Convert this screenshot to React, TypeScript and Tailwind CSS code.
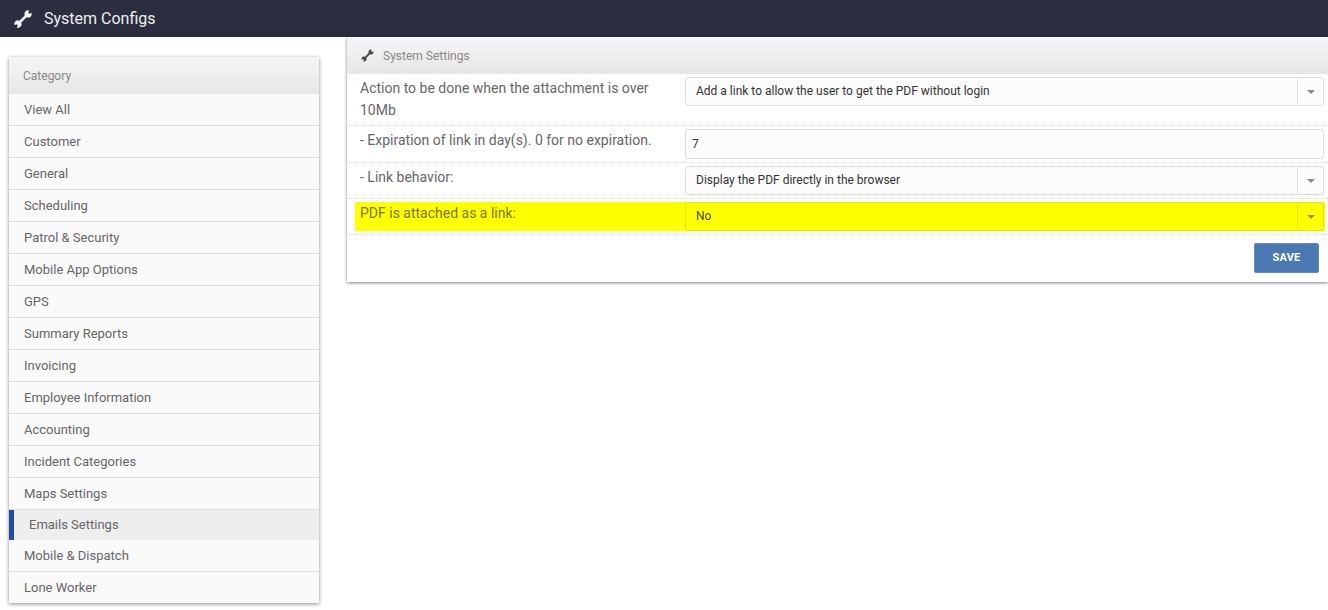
import React from "react";

const cats = ["View All","Customer","General","Scheduling","Patrol & Security","Mobile App Options","GPS","Summary Reports","Invoicing","Employee Information","Accounting","Incident Categories","Maps Settings"];

function Spanner({ className }: { className: string }) {
  return (
    <svg viewBox="0 0 24 24" className={className} fill="currentColor">
      <path transform="rotate(-45 12 12)" d="M7.91 10.5H16.09A4 4 0 0 1 23.4 10.25L21 11V13L23.4 13.75A4 4 0 0 1 16.09 13.5H7.91A4 4 0 0 1 0.6 13.75L3 13V11L0.6 10.25A4 4 0 0 1 7.91 10.5Z" />
    </svg>
  );
}

function Caret({ yellow }: { yellow?: boolean }) {
  return <span className={`h-0 w-0 border-x-[4px] border-t-[4px] border-x-transparent ${yellow ? "border-t-[#8f8f00]" : "border-t-[#888]"}`} />;
}

function SelectBox({ text, yellow }: { text: string; yellow?: boolean }) {
  return (
    <div className={`flex h-[29px] flex-1 items-center rounded-[3px] border pl-[10px] text-[12px] ${yellow ? "border-[#e3e300] bg-[#ffff00] text-[#444400]" : "border-[#dcdcdc] bg-[#fcfcfc] text-[#333]"}`}>
      <span className="flex-1 pb-[2px]">{text}</span>
      <span className={`flex h-[25px] w-[26px] items-center justify-center border-l ${yellow ? "border-[#e3e300]" : "border-[#dcdcdc]"}`}><Caret yellow={yellow} /></span>
    </div>
  );
}

export default function App() {
  return (
    <div className="h-[610px] w-[1328px] overflow-hidden bg-white font-['Roboto',sans-serif]">
      <header className="flex h-[37px] items-center bg-[#2b2e3e] pl-[12px] text-white">
        <Spanner className="h-[22px] w-[22px] text-[#f2f2f2]" />
        <span className="ml-[10px] text-[16px] text-[#eee]">System Configs</span>
      </header>
      <div className="flex items-start">
        <aside className="ml-[9px] mt-[20px] w-[310px] shadow-[0_1px_4px_rgba(0,0,0,0.45)]">
          <div className="flex h-[37px] items-center bg-gradient-to-b from-[#f6f6f6] to-[#e6e6e6] pl-[14px] text-[12px] text-[#888]">Category</div>
          {cats.map((c) => (
            <div key={c} className="flex h-[32px] items-center border-b border-[#ddd] bg-[#fafafa] pl-[15px] text-[13px] text-[#666]">{c}</div>
          ))}
          <div className="flex h-[30px] items-center border-l-[5px] border-[#1f4ea1] bg-[#eeeeee] pl-[15px] text-[13px] text-[#666]">Emails Settings</div>
          <div className="flex h-[32px] items-center border-b border-[#ddd] bg-[#fafafa] pl-[15px] text-[13px] text-[#666]">Mobile &amp; Dispatch</div>
          <div className="flex h-[31px] items-center bg-[#fafafa] pl-[15px] text-[13px] text-[#666]">Lone Worker</div>
        </aside>
        <main className="ml-[28px] h-[245px] flex-1 bg-white shadow-[0_1px_3px_rgba(0,0,0,0.5)]">
          <div className="flex h-[37px] items-center bg-gradient-to-b from-[#f6f6f6] to-[#e6e6e6] pl-[13px] text-[12px] text-[#888]">
            <Spanner className="h-[15px] w-[15px] text-[#444]" />
            <span className="ml-[8px]">System Settings</span>
          </div>
          <div className="flex h-[52px] border-b border-dotted border-[#ddd] pl-[13px] pr-[4px] text-[14px] leading-[22px] text-[#666]">
            <div className="w-[325px] pt-[3px]">Action to be done when the attachment is over 10Mb</div>
            <div className="flex flex-1 items-start pt-[3px]"><SelectBox text="Add a link to allow the user to get the PDF without login" /></div>
          </div>
          <div className="flex h-[37px] border-b border-dotted border-[#ddd] pl-[13px] pr-[4px] text-[14px] leading-[22px] text-[#666]">
            <div className="w-[325px] pt-[3px]">- Expiration of link in day(s). 0 for no expiration.</div>
            <div className="flex flex-1 items-start pt-[3px]">
              <div className="flex h-[30px] flex-1 items-center rounded-[3px] border border-[#dcdcdc] bg-[#fcfcfc] pl-[6px] text-[12px] text-[#333]">7</div>
            </div>
          </div>
          <div className="flex h-[36px] border-b border-dotted border-[#ddd] pl-[13px] pr-[4px] text-[14px] leading-[22px] text-[#666]">
            <div className="w-[325px] pt-[3px]">- Link behavior:</div>
            <div className="flex flex-1 items-start pt-[3px]"><SelectBox text="Display the PDF directly in the browser" /></div>
          </div>
          <div className="flex h-[36px] border-b border-dotted border-[#ddd] pl-[8px] pr-[3px] pt-[3px]">
            <div className="flex h-[29px] flex-1 bg-[#ffff00] pl-[5px] text-[14px] leading-[22px] text-[#777700]">
              <div className="w-[325px]">PDF is attached as a link:</div>
              <div className="flex flex-1 pr-[1px]"><SelectBox text="No" yellow /></div>
            </div>
          </div>
          <div className="flex justify-end pr-[9px] pt-[8px]">
            <button className="h-[30px] w-[65px] rounded-[2px] border border-[#5f8cc4] bg-[#4a78b2] text-[11px] font-bold tracking-[0.2px] text-white">SAVE</button>
          </div>
        </main>
      </div>
    </div>
  );
}
